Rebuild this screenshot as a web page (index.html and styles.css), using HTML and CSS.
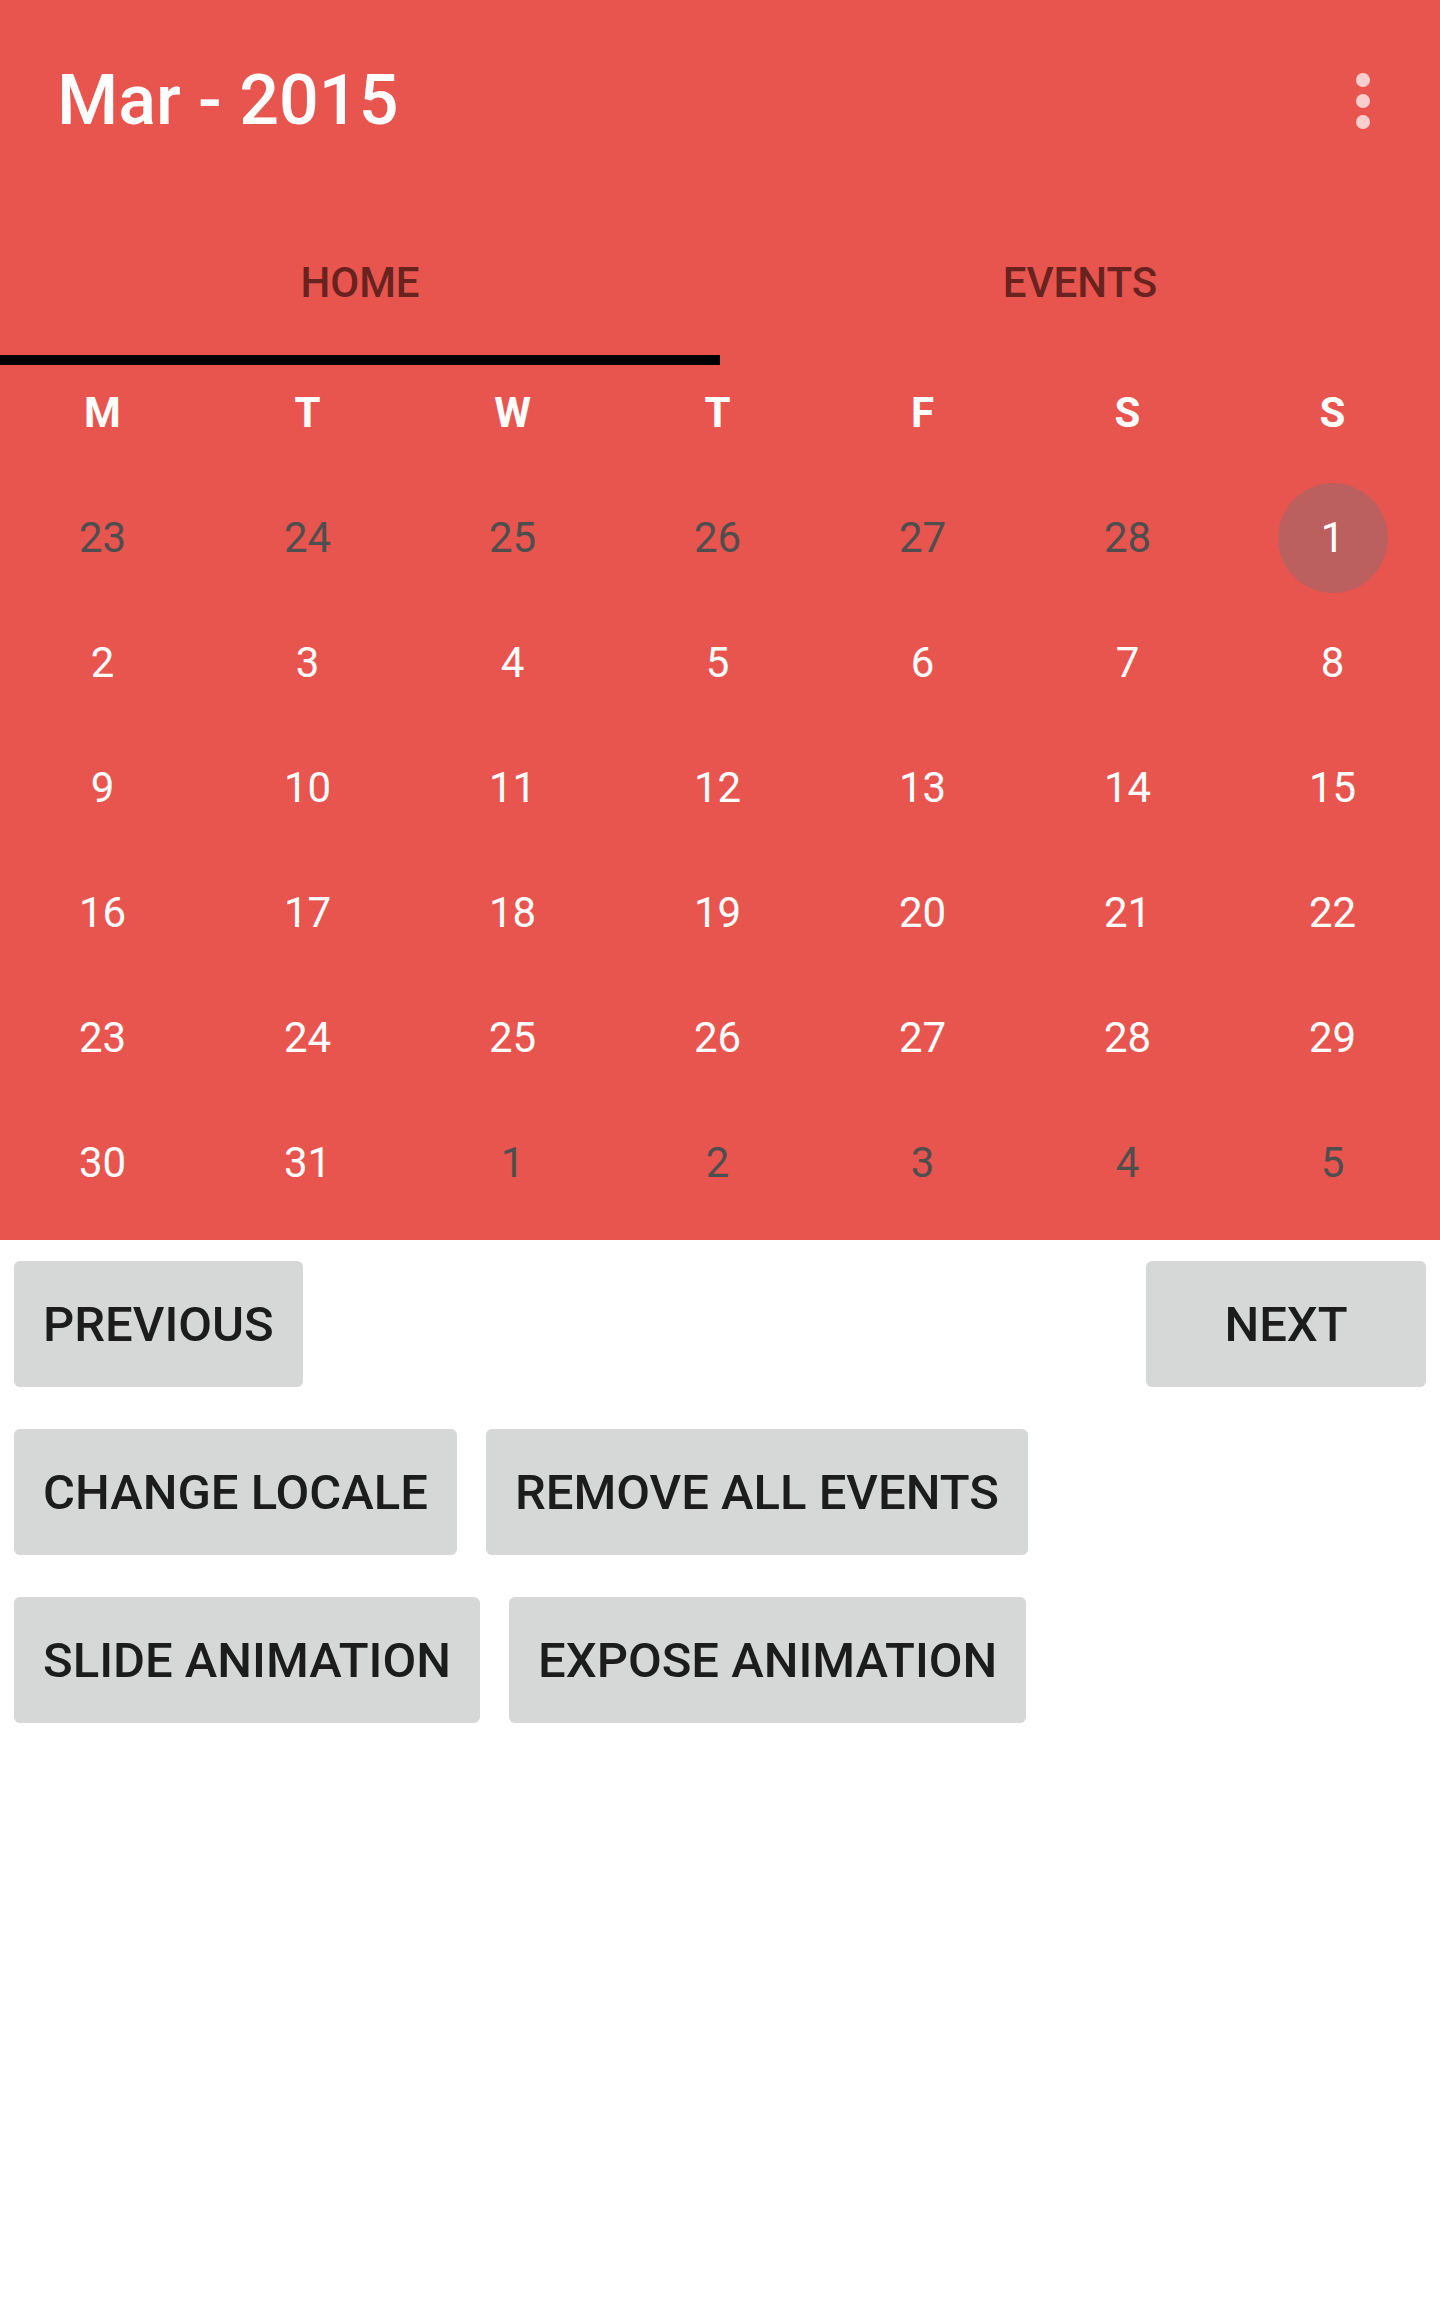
FILE: index.html
```html
<!DOCTYPE html>
<html lang="en">
<head>
    <meta charset="UTF-8">
    <meta name="viewport" content="width=device-width, initial-scale=1.0">
    <title>Calendar</title>
    <link rel="stylesheet" href="styles.css">
</head>
<body>
    <div class="header">
        <div class="toolbar">
            <h1 class="title">Mar - 2015</h1>
            <svg class="overflow" width="20" height="64" viewBox="0 0 20 64">
                <circle cx="10" cy="11" r="7"/>
                <circle cx="10" cy="32" r="7"/>
                <circle cx="10" cy="53" r="7"/>
            </svg>
        </div>

        <div class="tabs">
            <div class="tab active">HOME</div>
            <div class="tab">EVENTS</div>
        </div>

        <div class="calendar">
            <div class="weekdays">
                <div>M</div><div>T</div><div>W</div><div>T</div><div>F</div><div>S</div><div>S</div>
            </div>
            <div class="days">
                <div class="day other">23</div>
                <div class="day other">24</div>
                <div class="day other">25</div>
                <div class="day other">26</div>
                <div class="day other">27</div>
                <div class="day other">28</div>
                <div class="day"><span class="selected">1</span></div>

                <div class="day">2</div>
                <div class="day">3</div>
                <div class="day">4</div>
                <div class="day">5</div>
                <div class="day">6</div>
                <div class="day">7</div>
                <div class="day">8</div>

                <div class="day">9</div>
                <div class="day">10</div>
                <div class="day">11</div>
                <div class="day">12</div>
                <div class="day">13</div>
                <div class="day">14</div>
                <div class="day">15</div>

                <div class="day">16</div>
                <div class="day">17</div>
                <div class="day">18</div>
                <div class="day">19</div>
                <div class="day">20</div>
                <div class="day">21</div>
                <div class="day">22</div>

                <div class="day">23</div>
                <div class="day">24</div>
                <div class="day">25</div>
                <div class="day">26</div>
                <div class="day">27</div>
                <div class="day">28</div>
                <div class="day">29</div>

                <div class="day">30</div>
                <div class="day">31</div>
                <div class="day other">1</div>
                <div class="day other">2</div>
                <div class="day other">3</div>
                <div class="day other">4</div>
                <div class="day other">5</div>
            </div>
        </div>
    </div>

    <div class="actions">
        <div class="row spread">
            <button>PREVIOUS</button>
            <button>NEXT</button>
        </div>
        <div class="row">
            <button>CHANGE LOCALE</button>
            <button>REMOVE ALL EVENTS</button>
        </div>
        <div class="row">
            <button>SLIDE ANIMATION</button>
            <button>EXPOSE ANIMATION</button>
        </div>
    </div>
</body>
</html>
```

FILE: styles.css
```css
body {
    margin: 0;
    font-family: 'Roboto', 'Liberation Sans', sans-serif;
    background-color: #fff;
}
.header {
    background-color: #E8554F;
    padding-bottom: 15px;
}
.toolbar {
    height: 200px;
    display: flex;
    align-items: center;
    justify-content: space-between;
    padding: 0 67px 0 57px;
}
.title {
    margin: 0;
    color: #fff;
    font-size: 70px;
    font-weight: 500;
    line-height: 1;
}
.overflow {
    fill: rgba(255,255,255,0.72);
    margin-top: 2px;
}
.tabs {
    display: flex;
    height: 165px;
}
.tab {
    flex: 1;
    display: flex;
    align-items: center;
    justify-content: center;
    color: #68231F;
    font-size: 42px;
    font-weight: 500;
    line-height: 1;
}
.tab.active {
    box-shadow: inset 0 -10px 0 #000;
}
.weekdays, .days {
    display: grid;
    grid-template-columns: repeat(7, 205px);
}
.weekdays {
    height: 95px;
    margin-bottom: 15px;
}
.weekdays div {
    display: flex;
    align-items: center;
    justify-content: center;
    color: #fff;
    font-size: 42px;
    font-weight: 700;
}
.day {
    height: 125px;
    display: flex;
    align-items: center;
    justify-content: center;
    color: #fff;
    font-size: 42px;
}
.day.other {
    color: #4E4E4E;
}
.selected {
    width: 110px;
    height: 110px;
    border-radius: 50%;
    background-color: #BC605F;
    display: flex;
    align-items: center;
    justify-content: center;
}
.actions {
    padding: 21px 14px 0;
}
.row {
    display: flex;
    gap: 29px;
    margin-bottom: 42px;
}
.row.spread {
    justify-content: space-between;
}
button {
    height: 126px;
    min-width: 280px;
    padding: 0 29px;
    border: none;
    border-radius: 6px;
    background-color: #D6D7D7;
    color: #1C1C1C;
    font-family: 'Roboto', 'Liberation Sans', sans-serif;
    font-size: 49px;
    font-weight: 500;
}
```
